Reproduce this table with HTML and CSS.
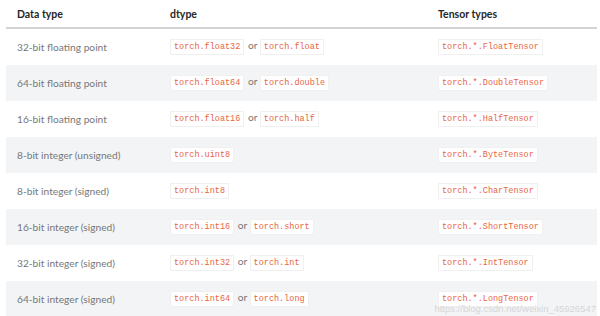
FILE: index.html
```html
<!DOCTYPE html>
<html lang="en">
<head>
    <meta charset="UTF-8">
    <title>Tensor types</title>
    <link rel="stylesheet" href="styles.css">
</head>
<body>
    <table class="dtype-table">
        <thead>
            <tr>
                <th class="col-type">Data type</th>
                <th class="col-dtype">dtype</th>
                <th class="col-tensor">Tensor types</th>
            </tr>
        </thead>
        <tbody>
            <tr>
                <td>32-bit floating point</td>
                <td><code>torch.float32</code> or <code>torch.float</code></td>
                <td><code>torch.*.FloatTensor</code></td>
            </tr>
            <tr>
                <td>64-bit floating point</td>
                <td><code>torch.float64</code> or <code>torch.double</code></td>
                <td><code>torch.*.DoubleTensor</code></td>
            </tr>
            <tr>
                <td>16-bit floating point</td>
                <td><code>torch.float16</code> or <code>torch.half</code></td>
                <td><code>torch.*.HalfTensor</code></td>
            </tr>
            <tr>
                <td>8-bit integer (unsigned)</td>
                <td><code>torch.uint8</code></td>
                <td><code>torch.*.ByteTensor</code></td>
            </tr>
            <tr>
                <td>8-bit integer (signed)</td>
                <td><code>torch.int8</code></td>
                <td><code>torch.*.CharTensor</code></td>
            </tr>
            <tr>
                <td>16-bit integer (signed)</td>
                <td><code>torch.int16</code> or <code>torch.short</code></td>
                <td><code>torch.*.ShortTensor</code></td>
            </tr>
            <tr>
                <td>32-bit integer (signed)</td>
                <td><code>torch.int32</code> or <code>torch.int</code></td>
                <td><code>torch.*.IntTensor</code></td>
            </tr>
            <tr>
                <td>64-bit integer (signed)</td>
                <td><code>torch.int64</code> or <code>torch.long</code></td>
                <td><code>torch.*.LongTensor</code></td>
            </tr>
        </tbody>
    </table>

    <div class="watermark">https://blog.csdn.net/weixin_45926547</div>
</body>
</html>
```

FILE: styles.css
```css
:root {
    --text-dark: #262626;
    --text-muted: #777;
    --code-color: #e8653f;
    --stripe: #f3f4f6;
    --rule: #d4d4d4;
}
body {
    margin: 0;
    padding: 0 3px 0 6px;
    background: #fff;
    font-family: Lato, "Open Sans", sans-serif;
    position: relative;
    height: 316px;
    overflow: hidden;
}
.dtype-table {
    width: 591px;
    border-collapse: collapse;
    table-layout: fixed;
}
.dtype-table th {
    height: 27px;
    padding: 0 0 0 11px;
    text-align: left;
    font-size: 10.5px;
    font-weight: 700;
    color: var(--text-dark);
    border-bottom: 2px solid var(--rule);
    vertical-align: middle;
}
.col-type {
    width: 142px;
}
.col-dtype {
    width: 257px;
}
.dtype-table td {
    height: 36px;
    padding: 0 0 0 11px;
    font-size: 10.2px;
    color: var(--text-muted);
    vertical-align: middle;
    white-space: nowrap;
}
.dtype-table tbody tr:nth-child(even) {
    background: var(--stripe);
}
.dtype-table code {
    display: inline-block;
    font-family: "Liberation Mono", "DejaVu Sans Mono", monospace;
    font-size: 8.5px;
    line-height: 12px;
    color: var(--code-color);
    background: #fff;
    border: 1px solid #f0f0f0;
    padding: 1px 3px;
    margin-right: 1px;
}
.watermark {
    position: absolute;
    right: 4px;
    bottom: 2px;
    font-family: "Liberation Sans", Arial, sans-serif;
    font-size: 9.5px;
    line-height: 11px;
    color: #d6d6d6;
}
```
